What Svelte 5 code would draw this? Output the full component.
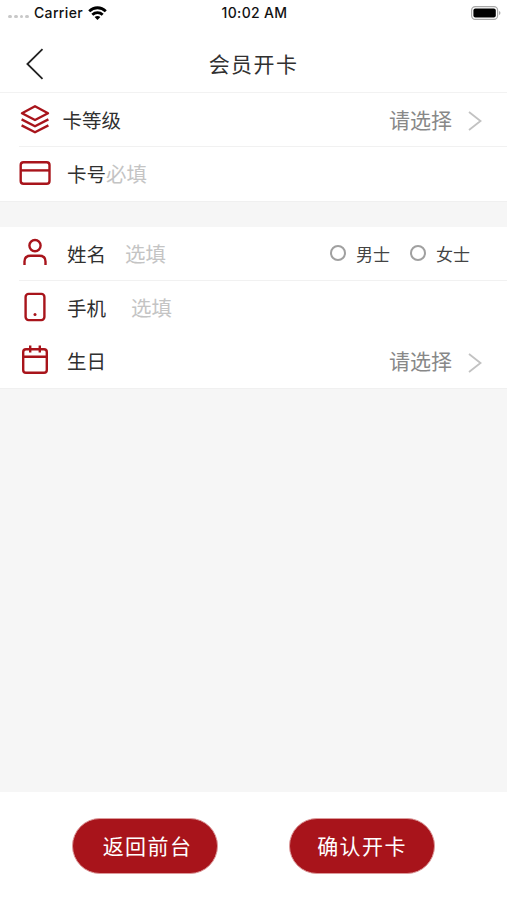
<script lang="ts">
    let cardNo = '';
    let name = '';
    let phone = '';
    let gender = '';

    const genders = ['男士', '女士'];
</script>

<div class="page">
    <div class="status-bar">
        <div class="status-left">
            <span class="signal"><i></i><i></i><i></i><i></i></span>
            <span>Carrier</span>
            <svg class="wifi" width="19" height="14" viewBox="0 0 19 14">
                <g fill="none" stroke="#000" stroke-width="2.8">
                    <path d="M1.2 5.2C6 0.6 13 0.6 17.8 5.2" />
                    <path d="M4.3 8.8C7.3 6 11.7 6 14.7 8.8" />
                </g>
                <path d="M6.6 11C8.3 9.5 10.7 9.5 12.4 11L9.5 14Z" />
            </svg>
        </div>
        <div class="status-time">10:02 AM</div>
        <svg class="battery" width="30" height="14" viewBox="0 0 30 14">
            <rect x="0.6" y="0.6" width="26" height="12.8" rx="3.6" fill="#fff" stroke="#a8a8a8" stroke-width="1.2" />
            <rect x="2.4" y="2.4" width="22.4" height="9.2" rx="2" fill="#000" />
            <path d="M28.2 5C29.8 5.8 29.8 8.2 28.2 9Z" fill="#999" />
        </svg>
    </div>

    <header class="nav-bar">
        <button class="back" aria-label="back">
            <svg width="18" height="32" viewBox="0 0 18 32">
                <path d="M16.5 1.2L1.4 16L16.5 30.8" fill="none" stroke="#222" stroke-width="1.8" />
            </svg>
        </button>
        <h1>会员开卡</h1>
    </header>

    <section class="group">
        <div class="row level">
            <svg class="icon" viewBox="0 0 32 32">
                <path d="M16 3.3L29 10.2L16 17L3 10.2Z" />
                <path d="M2.6 16.4L16 23.2L29.4 16.4" />
                <path d="M2.6 22.4L16 29.2L29.4 22.4" />
            </svg>
            <span class="label">卡等级</span>
            <span class="select">请选择</span>
            <svg class="arrow" viewBox="0 0 14 20"><path d="M1 1L12.5 10L1 19" /></svg>
        </div>
        <div class="row">
            <svg class="icon" viewBox="0 0 32 32">
                <rect x="1.7" y="5.3" width="28.8" height="21.4" rx="2.8" />
                <path d="M1.7 13.4H30.3" />
            </svg>
            <span class="label">卡号</span>
            <input bind:value={cardNo} placeholder="必填" />
        </div>
    </section>

    <section class="group">
        <div class="row">
            <svg class="icon" viewBox="0 0 32 32">
                <circle cx="16" cy="8.6" r="5.6" />
                <path d="M5.5 28V24.5Q5.5 18.8 11.5 18.8H20.5Q26.5 18.8 26.5 24.5V28" />
            </svg>
            <span class="label">姓名</span>
            <input class="name" bind:value={name} placeholder="选填" />
            <div class="genders">
                {#each genders as item}
                    <button class="radio" class:checked={gender === item} on:click={() => gender = item}>
                        <i></i>{item}
                    </button>
                {/each}
            </div>
        </div>
        <div class="row no-line">
            <svg class="icon" viewBox="0 0 32 32">
                <rect x="6.6" y="2.9" width="18.8" height="26.2" rx="3" />
                <circle class="dot" cx="16" cy="23.6" r="1.5" />
            </svg>
            <span class="label">手机</span>
            <input class="phone" bind:value={phone} placeholder="选填" />
        </div>
        <div class="row birthday no-line">
            <svg class="icon" viewBox="0 0 32 32">
                <rect x="4.2" y="5.2" width="23.6" height="23.6" rx="2.8" />
                <path d="M4.2 12.8H27.8M11.2 1.5V8.4M20.8 1.5V8.4" />
            </svg>
            <span class="label">生日</span>
            <span class="select">请选择</span>
            <svg class="arrow" viewBox="0 0 14 20"><path d="M1 1L12.5 10L1 19" /></svg>
        </div>
    </section>

    <footer class="footer">
        <button class="btn back-btn">返回前台</button>
        <button class="btn">确认开卡</button>
    </footer>
</div>

<style>
    :global(body) {
        background-color: #f6f6f6;
    }

    .page {
        display: flex;
        flex-direction: column;
        height: 900px;
        background-color: #f6f6f6;
        font-family: "Noto Sans CJK SC", sans-serif;
        color: #303030;
    }

    button, input {
        padding: 0;
        border: none;
        outline: none;
        background: none;
        font-family: inherit;
        color: inherit;
    }

    .status-bar {
        display: grid;
        grid-template-columns: 1fr auto 1fr;
        align-items: center;
        height: 26px;
        box-sizing: border-box;
        padding: 0 6px 1px 8px;
        background-color: #fff;
        font-family: Inter, sans-serif;
        font-size: 14px;
        font-weight: 500;
        letter-spacing: 0.35px;
        color: #111;
    }

    .status-left {
        display: flex;
        align-items: center;
    }

    .signal {
        display: flex;
        gap: 2px;
        margin: 8px 5px 0 0;
    }

    .signal i {
        width: 3.75px;
        height: 3.75px;
        border-radius: 50%;
        background-color: #c8c8c8;
    }

    .wifi {
        margin-left: 5px;
    }

    .battery {
        justify-self: end;
        margin-top: 1px;
    }

    .nav-bar {
        display: grid;
        grid-template-columns: 1fr auto 1fr;
        align-items: center;
        height: 66px;
        padding: 0 26px;
        border-bottom: 1px solid #f2f2f2;
        background-color: #fff;
    }

    .back {
        display: flex;
        margin-top: 9px;
    }

    .back svg {
        display: block;
    }

    h1 {
        margin: 8px 0 0;
        font-size: 21px;
        font-weight: 400;
        letter-spacing: 1.4px;
    }

    .group {
        margin-bottom: 25px;
        padding-left: 19px;
        border-bottom: 1px solid #f0f0f0;
        background-color: #fff;
    }

    .row {
        display: flex;
        align-items: center;
        height: 54px;
        box-sizing: border-box;
        padding-right: 25px;
        border-bottom: 1px solid #f1f1f1;
    }

    .row:last-child, .no-line {
        border-bottom-color: transparent;
    }

    .birthday {
        height: 53px;
    }

    .icon {
        width: 32px;
        height: 32px;
        flex: none;
        margin: 0 16.5px 2px -0.5px;
        fill: none;
        stroke: #a8141b;
        stroke-width: 2.4;
        stroke-linejoin: round;
    }

    .level .icon {
        margin-right: 12px;
    }

    .icon .dot {
        fill: #a8141b;
        stroke: none;
    }

    .label {
        padding-bottom: 1px;
        font-size: 19.5px;
    }

    input {
        width: 150px;
        padding-bottom: 2px;
        font-size: 20.5px;
    }

    input::placeholder {
        color: #c4c4c4;
        opacity: 1;
    }

    .name {
        margin-left: 19px;
    }

    .phone {
        margin-left: 25px;
    }

    .select {
        margin-left: auto;
        padding-bottom: 2px;
        font-size: 21px;
        color: #888;
    }

    .arrow {
        width: 14px;
        height: 20px;
        margin: 3px 0 0 16px;
        fill: none;
        stroke: #c2c2c2;
        stroke-width: 1.8;
    }

    .genders {
        display: flex;
        gap: 20px;
        margin: 0 12px 1px auto;
    }

    .radio {
        display: flex;
        align-items: center;
        font-size: 17px;
        color: #444;
    }

    .radio i {
        width: 16px;
        height: 16px;
        box-sizing: border-box;
        margin-right: 10px;
        border: 2px solid #a0a0a0;
        border-radius: 50%;
    }

    .radio.checked i {
        border: 5px solid #a8141b;
    }

    .footer {
        display: flex;
        justify-content: space-between;
        height: 108px;
        box-sizing: border-box;
        margin-top: auto;
        padding: 26px 72px 0;
        background-color: #fff;
    }

    .btn {
        width: 146px;
        height: 56px;
        padding-bottom: 2px;
        border: 1px solid #dc9a9b;
        border-radius: 28px;
        background-color: #a8141b;
        font-size: 21px;
        letter-spacing: 1.4px;
        color: #fff;
    }

    .back-btn {
        padding-left: 5px;
    }
</style>
